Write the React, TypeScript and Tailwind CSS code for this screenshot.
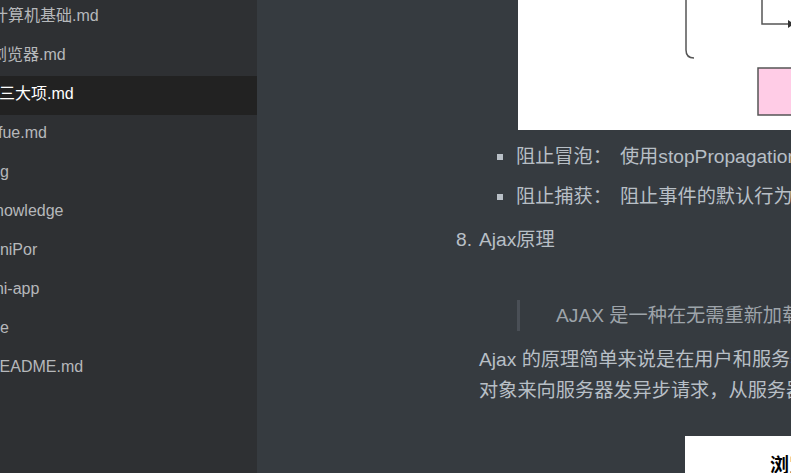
const files = [
  { name: "计算机基础.md", ml: "ml-[-8px]" },
  { name: "浏览器.md", ml: "ml-[-9px]" },
  { name: "三大项.md", ml: "ml-[-1px]", active: true },
  { name: "fue.md", ml: "ml-[-2px]" },
  { name: "img", ml: "ml-[-17px]" },
  { name: "knowledge", ml: "ml-[-13px]" },
  { name: "uniPor", ml: "ml-[-9px]" },
  { name: "uni-app", ml: "ml-[-14px]" },
  { name: "ne", ml: "ml-[-9px]" },
  { name: "README.md", ml: "ml-[-12px]" },
];

function Sidebar() {
  return (
    <aside className="w-[257px] shrink-0 overflow-hidden bg-[#2e3033]">
      <div className="mt-[-2px] flex flex-col">
        {files.map((f) => (
          <div
            key={f.name}
            className={
              f.active
                ? "flex h-[39px] items-center bg-[#222222] text-white"
                : "flex h-[39px] items-center text-[#b6b8bb]"
            }
          >
            <span className={`${f.ml} whitespace-nowrap pb-[3px] text-[16px]`}>{f.name}</span>
          </div>
        ))}
      </div>
    </aside>
  );
}

function Diagram() {
  return (
    <div className="ml-[62px] h-[130px] w-[420px] bg-white">
      <svg width="420" height="130" viewBox="0 0 420 130">
        <path d="M168 -2 V50 Q168 58 176 58" fill="none" stroke="#555" strokeWidth="1.5" />
        <path d="M244 -2 V24 H272" fill="none" stroke="#555" strokeWidth="1.5" />
        <path d="M270 20 L276 24 L270 28 Z" fill="#333" />
        <rect x="240" y="68" width="120" height="47" fill="#ffcce6" stroke="#555" strokeWidth="1.5" />
      </svg>
    </div>
  );
}

const bullets = [
  ["阻止冒泡：", "使用stopPropagation()方法阻止事件冒泡"],
  ["阻止捕获：", "阻止事件的默认行为"],
];

export default function App() {
  return (
    <div
      className="flex h-[473px] w-[791px] overflow-hidden"
      style={{ fontFamily: '"Liberation Sans", Arial, "Noto Sans CJK SC", sans-serif' }}
    >
      <Sidebar />
      <main className="flex-1 overflow-hidden bg-[#363b40] pl-[199px] text-[19.2px] text-[#b8bfc6]">
        <div className="w-[700px]">
          <Diagram />
          <ul className="mt-[7px] pl-[41px]">
            {bullets.map(([label, text]) => (
              <li key={label} className="flex items-center whitespace-nowrap py-[5px] leading-[30px]">
                <span className="mr-[13px] h-[6px] w-[6px] shrink-0 bg-[#b8bfc6]" />
                <span>{label}</span>
                <span className="ml-[8px]">{text}</span>
              </li>
            ))}
          </ul>
          <div className="mt-[8px] flex gap-[7px] leading-[30px]">
            <span>8.</span>
            <div className="flex-1">
              <p>Ajax原理</p>
              <blockquote className="ml-[38px] mt-[45px] whitespace-nowrap border-l-[3px] border-[#4a4f56] pl-[36px] leading-[31px] text-[#9ea4aa]">
                AJAX 是一种在无需重新加载整个网页的情况下，能够更新部分网页的技术。
              </blockquote>
              <p className="mt-[14px] whitespace-nowrap leading-[30.7px]">
                Ajax 的原理简单来说是在用户和服务器之间加了一个中间层(AJAX引擎)，通过XmlHttpRequest
                <br />
                对象来向服务器发异步请求，从服务器获得数据，然后用javascript来操作DOM而更新页面。
              </p>
              <div className="ml-[206px] mt-[30px] h-[60px] w-[400px] bg-white pl-[85px] pt-[15px]">
                <span className="text-[19px] font-bold leading-[24px] text-black">浏览器</span>
              </div>
            </div>
          </div>
        </div>
      </main>
    </div>
  );
}
